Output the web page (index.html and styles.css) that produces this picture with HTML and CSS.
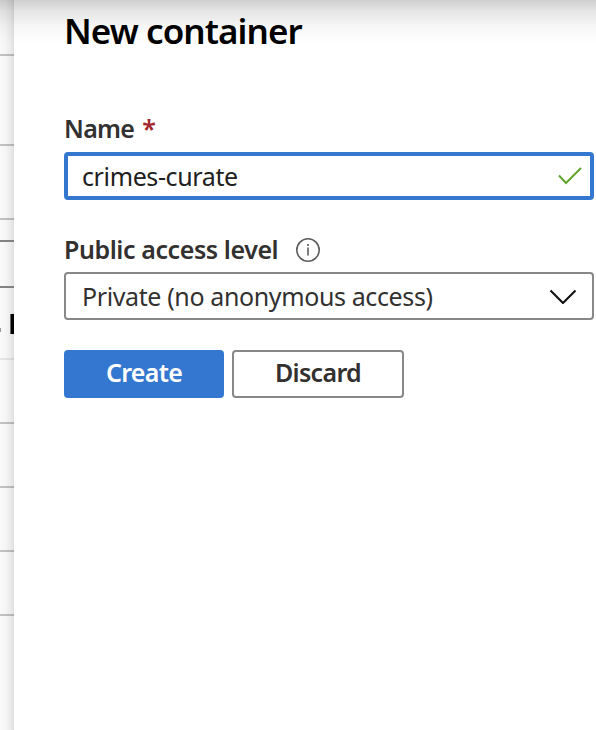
FILE: index.html
```html
<!DOCTYPE html>
<html lang="en">
<head>
<meta charset="utf-8">
<title>New container</title>
<link rel="stylesheet" href="styles.css">
</head>
<body>
<div class="app">
  <aside class="backdrop">
    <div class="row row-a"></div>
    <div class="row row-b"></div>
    <div class="row row-c"></div>
    <div class="row row-d dark"></div>
    <div class="row row-e dark"></div>
    <div class="row row-f faint"><span class="dot"></span><span class="stem"></span></div>
    <div class="row"></div>
    <div class="row"></div>
    <div class="row"></div>
    <div class="row"></div>
  </aside>
  <main class="panel">
    <h1 class="title">New container</h1>
    <form class="form">
      <div class="label name-label"><span class="name-text">Name</span><span class="required">*</span></div>
      <div class="field focused">
        <span class="value">crimes-curate</span>
        <svg class="check" viewBox="0 0 26 20" width="26" height="20"><path d="M2 9.500 9 17 24 2"/></svg>
      </div>
      <div class="label access-label"><span class="access-text">Public access level</span>
        <svg class="info" viewBox="0 0 24 24" width="24" height="24"><circle cx="12" cy="12" r="11.2"/><path d="M12 9.500v8M12 6v2"/></svg>
      </div>
      <div class="field">
        <span class="value">Private (no anonymous access)</span>
        <svg class="chevron" viewBox="0 0 28 16" width="28" height="16"><path d="M1.500 2.500 14 15 26.500 2.500"/></svg>
      </div>
      <div class="actions">
        <button type="button" class="button primary">Create</button>
        <button type="button" class="button">Discard</button>
      </div>
    </form>
  </main>
  <div class="top-shade"></div>
</div>
</body>
</html>
```
FILE: styles.css
```css
* { box-sizing: border-box; }
body {
  margin: 0;
  font-family: "Noto Sans", "Open Sans", sans-serif;
  font-size: 25px;
  color: #323130;
  background: #fff;
}
.app {
  position: relative;
  display: flex;
  width: 596px;
  height: 730px;
  overflow: hidden;
}
.backdrop {
  width: 14px;
  flex: none;
  background: linear-gradient(to right, #fafafa 0, #f5f5f5 40%, #ebebeb 75%, #dfdfdf 100%);
}
.row { height: 64px; border-bottom: 2px solid rgba(0, 0, 0, 0.22); }
.row-a { height: 56px; }
.row-b { height: 90px; }
.row-c { height: 74px; }
.row-d { height: 22px; }
.row-e { height: 46px; }
.row-f { height: 72px; display: flex; align-items: flex-start; }
.dark { border-color: #828282; }
.faint { border-color: rgba(0, 0, 0, 0.08); }
.dot { width: 1px; height: 4px; margin-top: 40px; background: #999; }
.stem { width: 4px; height: 20px; margin: 26px 0 0 9px; background: #000; border-left: 1px solid #666; }
.panel { flex: 1; padding: 0 2px 0 50px; background: #fff; }
.title {
  margin: 0;
  height: 112px;
  padding-top: 7px;
  font-size: 35px;
  line-height: 48px;
  font-weight: 600;
  letter-spacing: -0.92px;
  color: #000;
}
.label {
  display: flex;
  align-items: center;
  height: 34px;
  font-weight: 600;
  letter-spacing: -0.42px;
  white-space: nowrap;
}
.name-label { height: 40px; padding-bottom: 8px; }
.name-text { letter-spacing: -0.7px; }
.required { margin-left: 8px; color: #a4262c; }
.field {
  display: flex;
  align-items: center;
  justify-content: space-between;
  height: 48px;
  padding: 0 15px 0 16px;
  border: 2px solid #8a8886;
  border-radius: 4px;
  white-space: nowrap;
}
.value { letter-spacing: -0.38px; }
.focused { border: 4px solid #3477d0; padding: 0 7px 0 14px; color: #202020; }
.access-label { height: 72px; padding-top: 28px; }
.access-text { margin-top: -2px; }
svg { flex: none; fill: none; }
.check { stroke: #62a52c; stroke-width: 2; }
.chevron { stroke: #111; stroke-width: 2.1; }
.info { margin-left: 18px; stroke: #605e5c; stroke-width: 1.6; }
.actions { display: flex; gap: 8px; margin-top: 30px; }
.button {
  width: 172px;
  height: 48px;
  padding: 0 0 3px;
  border: 2px solid #8a8886;
  border-radius: 4px;
  background: #fff;
  color: #323130;
  font: 600 25px/41px "Noto Sans", "Open Sans", sans-serif;
  letter-spacing: -0.68px;
}
.primary { width: 160px; border-color: #3477d0; background: #3477d0; color: #fff; }
.top-shade {
  position: absolute;
  inset: 0 0 auto 0;
  height: 44px;
  background: linear-gradient(rgba(0, 0, 0, 0.19), rgba(0, 0, 0, 0.1) 25%, rgba(0, 0, 0, 0.035) 60%, transparent);
  pointer-events: none;
}
```
